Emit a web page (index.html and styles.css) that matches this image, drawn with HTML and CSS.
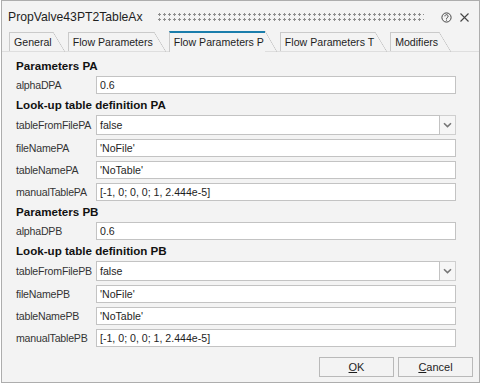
FILE: index.html
```html
<!DOCTYPE html>
<html lang="en">
<head>
    <meta charset="UTF-8">
    <title>PropValve43PT2TableAx</title>
    <link rel="stylesheet" href="styles.css">
</head>
<body>
    <div class="window">
        <div class="titlebar">
            <span class="title">PropValve43PT2TableAx</span>
            <div class="grip"></div>
            <svg class="tb-icon" width="11" height="11" viewBox="0 0 11 11">
                <circle cx="5.5" cy="5.5" r="4.6" fill="none" stroke="#444" stroke-width="1"/>
                <path d="M3.9 4.3 A1.6 1.6 0 1 1 6.4 5.6 C5.8 6 5.5 6.2 5.5 6.9" fill="none" stroke="#444" stroke-width="1"/>
                <rect x="5" y="7.6" width="1" height="1" fill="#444"/>
            </svg>
            <svg class="tb-icon" width="11" height="11" viewBox="0 0 11 11">
                <path d="M1.5 1.5 L9.5 9.5 M9.5 1.5 L1.5 9.5" stroke="#444" stroke-width="1.1"/>
            </svg>
        </div>

        <div class="tabs">
            <div class="tab">General</div>
            <div class="tab">Flow Parameters</div>
            <div class="tab active">Flow Parameters P</div>
            <div class="tab">Flow Parameters T</div>
            <div class="tab">Modifiers</div>
        </div>

        <div class="panel">
            <div class="form">
                <div class="section">Parameters PA</div>
                <div class="row"><span class="label">alphaDPA</span><div class="field">0.6</div></div>

                <div class="section">Look-up table definition PA</div>
                <div class="row combo-row">
                    <span class="label">tableFromFilePA</span>
                    <div class="combo">
                        <div class="combo-text">false</div>
                        <div class="combo-btn">
                            <svg width="9" height="6" viewBox="0 0 9 6"><path d="M1 1.2 L4.5 4.6 L8 1.2" fill="none" stroke="#777" stroke-width="1.6"/></svg>
                        </div>
                    </div>
                </div>
                <div class="row"><span class="label">fileNamePA</span><div class="field">'NoFile'</div></div>
                <div class="row"><span class="label">tableNamePA</span><div class="field">'NoTable'</div></div>
                <div class="row"><span class="label">manualTablePA</span><div class="field">[-1, 0; 0, 0; 1, 2.444e-5]</div></div>

                <div class="section">Parameters PB</div>
                <div class="row"><span class="label">alphaDPB</span><div class="field">0.6</div></div>

                <div class="section">Look-up table definition PB</div>
                <div class="row combo-row">
                    <span class="label">tableFromFilePB</span>
                    <div class="combo">
                        <div class="combo-text">false</div>
                        <div class="combo-btn">
                            <svg width="9" height="6" viewBox="0 0 9 6"><path d="M1 1.2 L4.5 4.6 L8 1.2" fill="none" stroke="#777" stroke-width="1.6"/></svg>
                        </div>
                    </div>
                </div>
                <div class="row"><span class="label">fileNamePB</span><div class="field">'NoFile'</div></div>
                <div class="row"><span class="label">tableNamePB</span><div class="field">'NoTable'</div></div>
                <div class="row"><span class="label">manualTablePB</span><div class="field">[-1, 0; 0, 0; 1, 2.444e-5]</div></div>
            </div>

            <div class="buttons">
                <div class="btn"><u>O</u>K</div>
                <div class="btn"><u>C</u>ancel</div>
            </div>
        </div>
    </div>
</body>
</html>
```

FILE: styles.css
```css
body {
    margin: 0;
    background: #ffffff;
    font-family: 'Liberation Sans', Arial, sans-serif;
    color: #222222;
}

.window {
    box-sizing: border-box;
    width: 479px;
    height: 383px;
    margin-left: 1px;
    background: #f3f3f3;
    border: 1px solid #adadad;
}

/* title bar */
.titlebar {
    display: flex;
    align-items: center;
    height: 30px;
    padding: 0 9px 0 6px;
}

.title {
    font-size: 12.2px;
    color: #1e1e1e;
    margin-top: 2px;
}

.grip {
    flex: 1;
    height: 10px;
    margin: 2px 10px 0 14px;
    background-image: radial-gradient(circle, #8e8e8e 1px, transparent 1.3px);
    background-size: 5px 5px;
}

.tb-icon {
    margin-left: 7px;
    margin-top: 2px;
}

/* tabs */
.tabs {
    display: flex;
    align-items: flex-end;
    height: 20px;
    padding-left: 7px;
    border-bottom: 1px solid #dedede;
}

.tab {
    position: relative;
    box-sizing: border-box;
    height: 19px;
    margin-right: 15px;
    padding: 3px 1px 0 4px;
    border-left: 1px solid #cacaca;
    border-top: 1px solid #cacaca;
    font-size: 10.6px;
    color: #1e1e1e;
    white-space: nowrap;
}

.tab::after {
    content: "";
    position: absolute;
    top: -1px;
    right: -12px;
    width: 12px;
    height: 20px;
    background: linear-gradient(to top right, transparent calc(50% - 0.6px), #c4c4c4 50%, transparent calc(50% + 0.6px));
}

.tab.active {
    height: 21px;
    margin-bottom: -1px;
    padding-top: 3px;
    border-top: 2px solid #1a7dab;
    background: #f3f3f3;
    z-index: 1;
}

.tab.active::after {
    top: -2px;
    height: 21px;
}

/* form */
.panel {
    padding: 5px 6px 0 14px;
}

.form {
    margin-right: 17px;
}

.section {
    height: 17px;
    line-height: 17px;
    font-size: 11.6px;
    font-weight: bold;
    color: #111111;
}

.row {
    display: flex;
    align-items: center;
    height: 22px;
}

.combo-row {
    height: 24px;
}

.label {
    width: 80px;
    font-size: 10.6px;
    letter-spacing: -0.2px;
    color: #333333;
    white-space: nowrap;
}

.field {
    flex: 1;
    box-sizing: border-box;
    height: 18px;
    line-height: 16px;
    padding-left: 3px;
    background: #ffffff;
    border: 1px solid #c3c3c3;
    font-size: 10.6px;
    color: #1e1e1e;
}

.combo {
    flex: 1;
    display: flex;
    height: 20px;
}

.combo-text {
    flex: 1;
    box-sizing: border-box;
    line-height: 18px;
    padding-left: 3px;
    background: #ffffff;
    border: 1px solid #c3c3c3;
    font-size: 10.6px;
    color: #1e1e1e;
}

.combo-btn {
    box-sizing: border-box;
    width: 16px;
    display: flex;
    align-items: center;
    justify-content: center;
    border: 1px solid #cfcfcf;
    border-left: none;
    background: #f6f6f6;
}

/* dialog buttons */
.buttons {
    display: flex;
    justify-content: flex-end;
    gap: 4px;
    margin-top: 8px;
}

.btn {
    box-sizing: border-box;
    width: 75px;
    height: 20px;
    line-height: 18px;
    text-align: center;
    border: 1px solid #b9b9b9;
    background: #f3f3f3;
    font-size: 11px;
    color: #1e1e1e;
}

.btn u {
    text-decoration-thickness: 1px;
    text-underline-offset: 1px;
}
```
